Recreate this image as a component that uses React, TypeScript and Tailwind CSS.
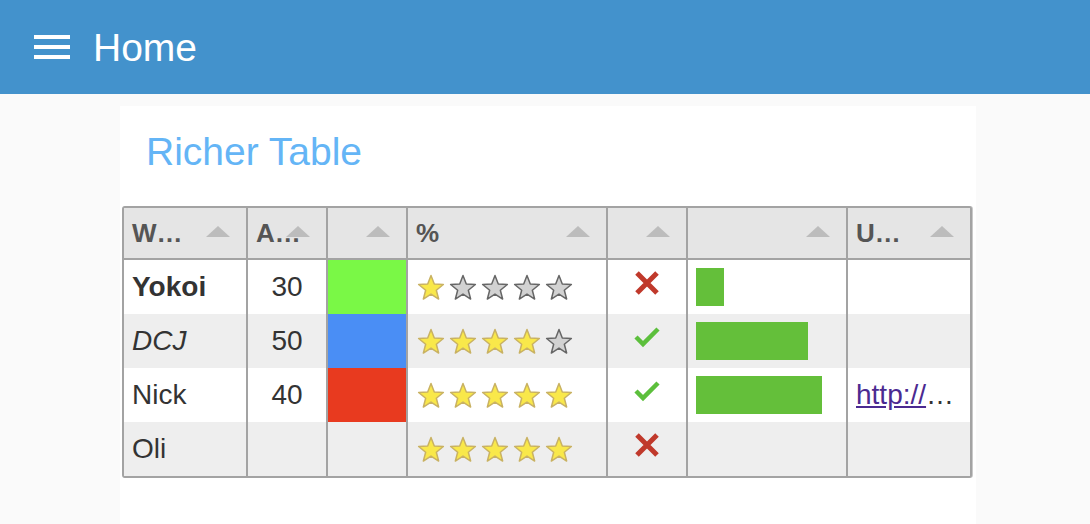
import React from 'react'

const rows = [
  { name: 'Yokoi', style: 'font-bold', age: '30', color: 'bg-[#7af846]', stars: 1, ok: false, bar: 28, url: '' },
  { name: 'DCJ', style: 'italic', age: '50', color: 'bg-[#4a8ef5]', stars: 4, ok: true, bar: 112, url: '' },
  { name: 'Nick', style: '', age: '40', color: 'bg-[#e83a1f]', stars: 5, ok: true, bar: 126, url: 'http://' },
  { name: 'Oli', style: '', age: '', color: '', stars: 5, ok: false, bar: 0, url: '' },
]

const Arrow = () => (
  <svg className="absolute right-4 top-[18px]" width="24" height="11" viewBox="0 0 24 11">
    <polygon points="12,0 24,11 0,11" fill="#bcbcbc" />
  </svg>
)

const Star = ({ on }: { on: boolean }) => (
  <svg width="28" height="27" viewBox="0 0 28 27">
    <polygon
      points="14,1.5 17.29,9.97 26.36,10.48 19.33,16.23 21.64,25.02 14,20.1 6.36,25.02 8.67,16.23 1.64,10.48 10.71,9.97"
      fill={on ? '#f9e84a' : '#d2d2d2'}
      stroke={on ? '#c9b263' : '#666666'}
      strokeWidth="1.5"
      strokeLinejoin="round"
    />
  </svg>
)

const Check = () => (
  <svg width="28" height="22" viewBox="0 0 28 22">
    <polyline points="3,11 10,18 25,3" fill="none" stroke="#5cbf3c" strokeWidth="4.5" />
  </svg>
)

const Cross = () => (
  <svg width="26" height="26" viewBox="0 0 26 26">
    <path d="M3 3 L23 23 M23 3 L3 23" stroke="#c0392b" strokeWidth="5" />
  </svg>
)

const cols = 'grid grid-cols-[122px_78px_78px_198px_78px_158px_122px] gap-x-[2px]'

export default function App() {
  return (
    <div className="min-h-[524px] bg-[#fafafa] font-['Liberation_Sans',Arial,sans-serif] text-[#333]">
      {/* App bar */}
      <header className="flex h-[94px] items-center bg-[#4392cc] pl-[34px]">
        <div className="flex w-[36px] flex-col gap-[6px]">
          <span className="h-[4px] bg-white" />
          <span className="h-[4px] bg-white" />
          <span className="h-[4px] bg-white" />
        </div>
        <h1 className="ml-[23px] mt-[2px] text-[39px] text-white">Home</h1>
      </header>

      <div className="pl-[120px] pt-[12px]">
        <div className="w-[856px] bg-white px-[2px] pb-[46px] pt-[22px]">
          <h2 className="mb-[30px] pl-[24px] text-[39px] leading-[48px] text-[#64b5f6]">Richer Table</h2>

          <div className="inline-flex flex-col gap-y-[2px] rounded-[3px] border-2 border-[#a3a3a3] bg-[#a3a3a3] shadow-[1px_0_0_#c9c9c9]">
            {/* Header */}
            <div className={cols}>
              {['W…', 'A…', '', '%', '', '', 'U…'].map((h, i) => (
                <div key={i} className="relative flex h-[50px] items-center bg-[#e5e5e5] px-2 text-[26px] font-bold text-[#555]">
                  <span>{h}</span>
                  <Arrow />
                </div>
              ))}
            </div>

            {/* Body */}
            <div className={cols}>
              {rows.map((r, i) => {
                const bg = i % 2 === 0 ? 'bg-white' : 'bg-[#eeeeee]'
                return (
                  <React.Fragment key={r.name}>
                    <div className={`flex h-[54px] items-center px-2 text-[28px] ${bg} ${r.style}`}>{r.name}</div>
                    <div className={`flex h-[54px] items-center justify-center text-[28px] ${bg}`}>{r.age}</div>
                    <div className={`h-[54px] ${r.color || bg}`} />
                    <div className={`flex h-[54px] items-center gap-[4px] pl-[9px] ${bg}`}>
                      {[0, 1, 2, 3, 4].map((s) => (
                        <Star key={s} on={s < r.stars} />
                      ))}
                    </div>
                    <div className={`flex h-[54px] items-center justify-center pb-[8px] ${bg}`}>
                      {r.ok ? <Check /> : <Cross />}
                    </div>
                    <div className={`flex h-[54px] items-center px-2 ${bg}`}>
                      {r.bar > 0 && <div className="h-[38px] bg-[#64bf3a]" style={{ width: r.bar }} />}
                    </div>
                    <div className={`flex h-[54px] items-center whitespace-nowrap px-2 text-[28px] ${bg}`}>
                      {r.url && (
                        <>
                          <a href="#" className="text-[#4b2a91] underline">
                            {r.url}
                          </a>
                          <span>…</span>
                        </>
                      )}
                    </div>
                  </React.Fragment>
                )
              })}
            </div>
          </div>
        </div>
      </div>
    </div>
  )
}
